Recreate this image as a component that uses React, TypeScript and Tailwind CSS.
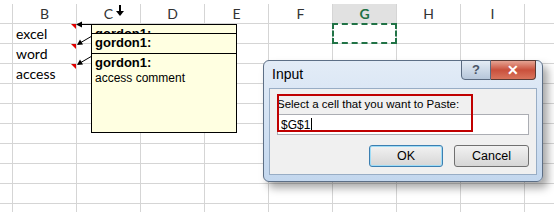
import React from 'react';

const cols = ['B', 'C', 'D', 'E', 'F', 'G', 'H', 'I'];
const cells: Record<number, string> = { 0: 'excel', 1: 'word', 2: 'access' };

const Comment: React.FC<{ top: number; height: number; body: string }> = ({ top, height, body }) => (
  <div
    className="absolute left-[91px] w-[146px] overflow-hidden border border-black bg-[#ffffe1] px-[3px] pt-[1px] font-['Liberation_Sans',sans-serif] text-black"
    style={{ top, height }}
  >
    <div className="text-[13px] font-bold leading-[16px]">gordon1:</div>
    <div className="text-[12px] leading-[15px]">{body}</div>
  </div>
);

export default function App() {
  return (
    <div className="relative h-[212px] w-[554px] overflow-hidden bg-white font-['Lato',sans-serif]">
      <div className="h-[4px]" />
      {/* column headers */}
      <div className="flex h-[20px] border-b border-[#d5d5d5] text-[14px] leading-[19px] text-[#333]">
        <div className="w-[13px] border-r border-[#d5d5d5]" />
        {cols.map((c) => (
          <div
            key={c}
            className={
              c === 'G'
                ? 'w-[64px] border-r border-[#d5d5d5] bg-[#e1e1e1] text-center font-bold text-[#1e7145]'
                : 'w-[64px] border-r border-[#d5d5d5] text-center'
            }
          >
            {c}
          </div>
        ))}
        <div className="flex-1" />
      </div>
      {/* rows */}
      {Array.from({ length: 10 }).map((_, r) => (
        <div key={r} className="flex h-[20px] border-b border-[#d5d5d5] text-[14px] leading-[19px] text-black">
          <div className="w-[13px] border-r border-[#d5d5d5]" />
          {cols.map((c) => (
            <div key={c} className="relative w-[64px] border-r border-[#d5d5d5] pl-[3px]">
              {c === 'B' ? cells[r] : null}
            </div>
          ))}
          <div className="flex-1" />
        </div>
      ))}

      {/* selection marquee on G1 */}
      <div className="absolute left-[332px] top-[23px] h-[21px] w-[65px] border-2 border-dashed border-[#217346]" />

      {/* mouse cursor on column C */}
      <svg className="absolute left-[115px] top-[5px]" width="10" height="12" viewBox="0 0 10 12">
        <rect x="4" y="0" width="2" height="7" fill="#000" />
        <path d="M1 6 L9 6 L5 11 Z" fill="#000" />
      </svg>

      {/* comment indicators and arrows */}
      <svg className="absolute left-0 top-0" width="100" height="80" viewBox="0 0 100 80">
        <path d="M71 24 L76 24 L76 29 Z" fill="#e00000" />
        <path d="M71 44 L76 44 L76 49 Z" fill="#e00000" />
        <path d="M71 64 L76 64 L76 69 Z" fill="#e00000" />
        <line x1="91" y1="24.5" x2="80" y2="24.5" stroke="#000" strokeWidth="1" />
        <path d="M76 24.5 L82 21.5 L82 27.5 Z" fill="#000" />
        <line x1="92" y1="36" x2="80" y2="43" stroke="#000" strokeWidth="1" />
        <path d="M77 45 L80 39.5 L83 44.5 Z" fill="#000" />
        <line x1="92" y1="56" x2="80" y2="63" stroke="#000" strokeWidth="1" />
        <path d="M77 65 L80 59.5 L83 64.5 Z" fill="#000" />
      </svg>

      <Comment top={24} height={10} body="excel comment" />
      <Comment top={33} height={21} body="word comment" />
      <Comment top={53} height={80} body="access comment" />

      {/* dialog */}
      <div className="absolute left-[263px] top-[60px] flex h-[122px] w-[280px] flex-col rounded-[6px] border border-[#5d6f86] bg-gradient-to-b from-[#e3ecf7] to-[#c3d7ee] px-[5px] pb-[6px] shadow-[5px_6px_9px_rgba(0,0,0,0.35)]">
        <div className="flex h-[27px] items-center pl-[3px] font-['Liberation_Sans',sans-serif] text-[14px] text-black">
          Input
        </div>
        <div className="absolute right-[6px] top-[-1px] flex h-[20px]">
          <div className="flex w-[30px] items-center justify-center rounded-bl-[4px] border border-[#5a6a80] bg-gradient-to-b from-[#e4ecf5] to-[#b6c6da] font-['Liberation_Sans',sans-serif] text-[13px] font-bold text-[#4a5566]">
            ?
          </div>
          <div className="flex w-[45px] items-center justify-center rounded-br-[4px] border border-l-0 border-[#5a3a34] bg-gradient-to-b from-[#e5a393] via-[#c9503c] to-[#d9745c] font-['Liberation_Sans',sans-serif] text-[14px] font-bold text-white">
            ✕
          </div>
        </div>
        <div className="flex flex-1 flex-col border border-[#98adc5] bg-[#f0f0f0] px-[7px] font-['Liberation_Sans',sans-serif] text-black">
          <div className="pt-[8px] text-[11.5px] leading-[14px]">Select a cell that you want to Paste:</div>
          <div className="mt-[3px] flex h-[21px] items-center border border-[#abadb3] bg-white pl-[3px] text-[12px]">
            $G$1<span className="ml-[1px] inline-block h-[14px] w-[1px] bg-black" />
          </div>
          <div className="mt-[10px] flex justify-end gap-[11px] text-[12.5px]">
            <div className="flex h-[22px] w-[74px] items-center justify-center rounded-[3px] border border-[#3c7fb1] bg-gradient-to-b from-[#f2f2f2] to-[#d6d6d6] shadow-[inset_0_0_0_1px_#9fdcf6]">
              OK
            </div>
            <div className="flex h-[22px] w-[75px] items-center justify-center rounded-[3px] border border-[#707070] bg-gradient-to-b from-[#f2f2f2] to-[#d6d6d6]">
              Cancel
            </div>
          </div>
        </div>
      </div>

      {/* red annotation box */}
      <div className="absolute left-[277px] top-[94px] h-[38px] w-[196px] border-2 border-[#c00000]" />
    </div>
  );
}
